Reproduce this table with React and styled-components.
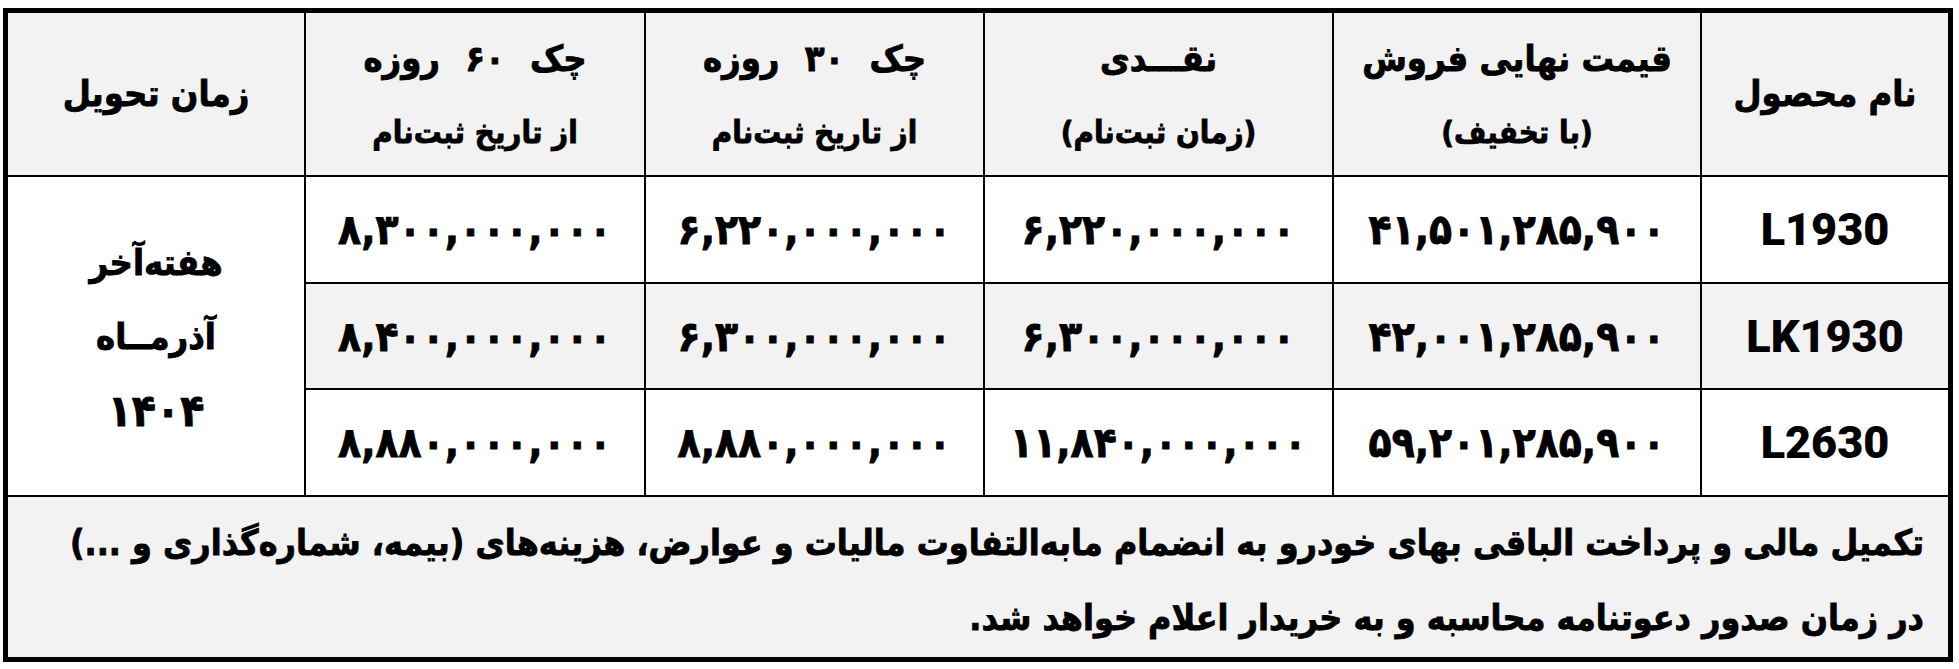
import React from "react";
import styled, { createGlobalStyle } from "styled-components";

const Global = createGlobalStyle`
  html, body { margin: 0; padding: 0; background: #ffffff; }
  body { font-family: "DejaVu Sans Condensed", "DejaVu Sans", sans-serif; color: #000; }
`;

const Sheet = styled.div`
  box-sizing: border-box;
  width: 1950px;
  margin: 8px 0 0 3px;
  display: grid;
  direction: rtl;
  grid-template-columns: 246px 366px 347px 337px 338px 296px;
  grid-template-rows: 162px 105px 104px 105px 160px;
  gap: 2px;
  background: #000;
  border: 5px solid #000;
`;

const Cell = styled.div`
  background: ${(p) => (p.$shade ? "#f2f2f2" : "#ffffff")};
  display: flex;
  flex-direction: column;
  align-items: center;
  justify-content: center;
  font-weight: 700;
  text-align: center;
  white-space: nowrap;
  -webkit-text-stroke: 0.8px #000;
`;

const HeadCell = styled(Cell)`
  background: #f2f2f2;
  gap: 30px;
`;

const HeadMain = styled.div`
  font-size: 36px;
  line-height: 46px;
  word-spacing: ${(p) => p.$wide || 0}px;
`;

const HeadSub = styled.div`
  font-size: 31px;
  line-height: 40px;
`;

const Model = styled(Cell)`
  font-family: Roboto, "Liberation Sans", sans-serif;
  font-weight: 900;
  font-size: 45px;
  -webkit-text-stroke: 0;
`;

const Price = styled(Cell)`
  font-size: 42px;
  direction: ltr;
`;

const Delivery = styled(Cell)`
  grid-row: span 3;
  font-size: 36px;
  line-height: 74px;
  background: #ffffff;
  padding-top: 2px;
`;

const Year = styled.div`
  font-size: 44px;
`;

const Footer = styled.div`
  grid-column: 1 / -1;
  background: #f2f2f2;
  display: flex;
  flex-direction: column;
  justify-content: center;
  padding: 6px 24px 0 0;
  font-weight: 700;
  font-size: 35.5px;
  line-height: 75px;
  white-space: nowrap;
  -webkit-text-stroke: 0.8px #000;
`;

const rows = [
  { name: "L1930", total: "۴۱,۵۰۱,۲۸۵,۹۰۰", cash: "۶,۲۲۰,۰۰۰,۰۰۰", c30: "۶,۲۲۰,۰۰۰,۰۰۰", c60: "۸,۳۰۰,۰۰۰,۰۰۰" },
  { name: "LK1930", total: "۴۲,۰۰۱,۲۸۵,۹۰۰", cash: "۶,۳۰۰,۰۰۰,۰۰۰", c30: "۶,۳۰۰,۰۰۰,۰۰۰", c60: "۸,۴۰۰,۰۰۰,۰۰۰" },
  { name: "L2630", total: "۵۹,۲۰۱,۲۸۵,۹۰۰", cash: "۱۱,۸۴۰,۰۰۰,۰۰۰", c30: "۸,۸۸۰,۰۰۰,۰۰۰", c60: "۸,۸۸۰,۰۰۰,۰۰۰" },
];

export default function App() {
  return (
    <>
      <Global />
      <Sheet>
        <HeadCell>
          <HeadMain>نام محصول</HeadMain>
        </HeadCell>
        <HeadCell>
          <HeadMain>قیمت نهایی فروش</HeadMain>
          <HeadSub>(با تخفیف)</HeadSub>
        </HeadCell>
        <HeadCell>
          <HeadMain>نقـــدی</HeadMain>
          <HeadSub>(زمان ثبت‌نام)</HeadSub>
        </HeadCell>
        <HeadCell>
          <HeadMain $wide={14}>چک ۳۰ روزه</HeadMain>
          <HeadSub>از تاریخ ثبت‌نام</HeadSub>
        </HeadCell>
        <HeadCell>
          <HeadMain $wide={14}>چک ۶۰ روزه</HeadMain>
          <HeadSub>از تاریخ ثبت‌نام</HeadSub>
        </HeadCell>
        <HeadCell>
          <HeadMain>زمان تحویل</HeadMain>
        </HeadCell>
        {rows.map((r, i) => (
          <React.Fragment key={r.name}>
            <Model $shade={i === 1}>{r.name}</Model>
            <Price $shade={i === 1}>{r.total}</Price>
            <Price $shade={i === 1}>{r.cash}</Price>
            <Price $shade={i === 1}>{r.c30}</Price>
            <Price $shade={i === 1}>{r.c60}</Price>
            {i === 0 && (
              <Delivery>
                <div>هفته‌آخر</div>
                <div>آذرمــاه</div>
                <Year>۱۴۰۴</Year>
              </Delivery>
            )}
          </React.Fragment>
        ))}
        <Footer>
          <div>تکمیل مالی و پرداخت الباقی بهای خودرو به انضمام مابه‌التفاوت مالیات و عوارض، هزینه‌های (بیمه، شماره‌گذاری و ...)</div>
          <div>در زمان صدور دعوتنامه محاسبه و به خریدار اعلام خواهد شد.</div>
        </Footer>
      </Sheet>
    </>
  );
}
